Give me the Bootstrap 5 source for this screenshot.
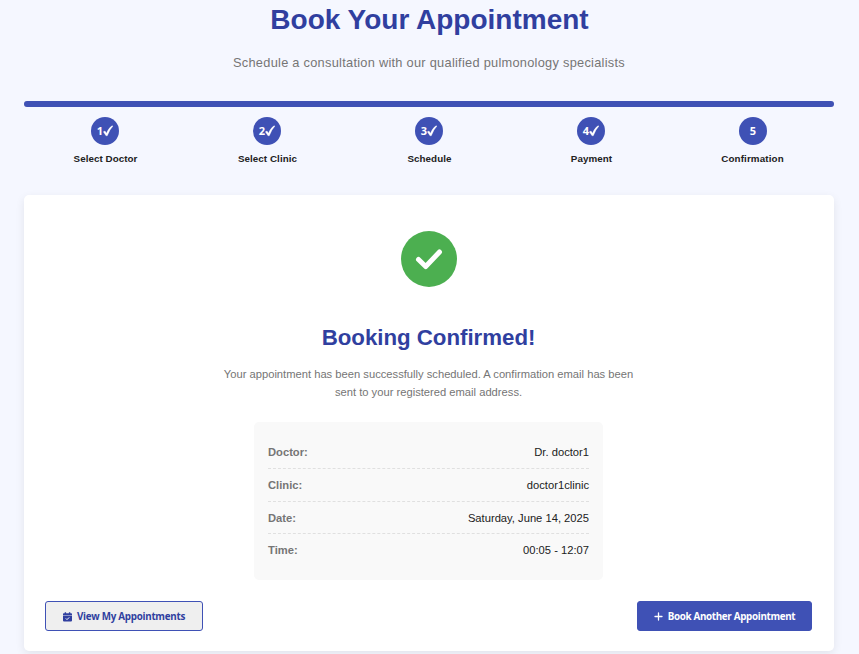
<!DOCTYPE html>
<html lang="en">
<head>
<meta charset="utf-8">
<meta name="viewport" content="width=device-width, initial-scale=1">
<title>Book Your Appointment</title>
<link href="https://cdn.jsdelivr.net/npm/bootstrap@5.3.0/dist/css/bootstrap.min.css" rel="stylesheet">
<style>
  body { background: #f5f7ff; font-family: "Liberation Sans", Arial, sans-serif; color: #212121; height: 654px; overflow: hidden; }
  .page { width: 810px; margin-left: 24px; }
  .page-title { font-size: 28px; line-height: 34px; color: #303f9f; padding-top: 3px; padding-left: 1px; }
  .page-sub { font-size: 12.8px; line-height: 20px; color: #757575; margin-top: 16px; letter-spacing: .27px; }
  .track { height: 6px; margin-top: 28px; background: #e0e0e0; border-radius: 3px; }
  .track .progress-bar { background: #3f51b5; }
  .steps { margin-top: 10px; }
  .step-dot { width: 28px; height: 28px; background: #3f51b5; font: 700 11px/28px "Open Sans", sans-serif; }
  .step-name { font-size: 9.8px; line-height: 15px; margin-top: 6px; padding-left: 1px; letter-spacing: .06px; }
  .col:last-child .step-name { padding-left: 0; padding-right: 1px; letter-spacing: .14px; }
  .panel { height: 456px; margin-top: 29px; padding: 36px 22px 20px 21px; border-radius: 5px; box-shadow: 0 3px 10px rgba(0,0,0,.08); }
  .panel-title { font-size: 22.3px; line-height: 28px; color: #303f9f; margin-top: 37px; letter-spacing: -.03px; }
  .panel-text { width: 420px; font-size: 11.2px; line-height: 18px; color: #757575; margin-top: 13px; }
  .details { width: 349px; height: 158px; margin-top: 21px; padding: 14px; background: #f9f9f9; border-radius: 5px; font-size: 11.2px; }
  .detail { height: 32px; line-height: 32px; }
  .detail:nth-child(2) { height: 33px; }
  .detail + .detail { border-top: 1px dashed #e0e0e0; }
  .detail-key { color: #757575; }
  .panel .btn { --bs-btn-border-color: #3f51b5; height: 30px; font: 700 9.8px/28px "Open Sans", sans-serif; letter-spacing: -.26px; border-radius: 3px; padding: 1px 0 0; gap: 5px; }
  .panel .btn-view { --bs-btn-color: #303f9f; --bs-btn-bg: #efefef; width: 158px; }
  .panel .btn-book { --bs-btn-color: #fff; --bs-btn-bg: #3f51b5; width: 175px; letter-spacing: -.31px; }
</style>
</head>
<body>
<main class="page">
  <h1 class="page-title fw-bold text-center mb-0">Book Your Appointment</h1>
  <p class="page-sub text-center mb-0">Schedule a consultation with our qualified pulmonology specialists</p>
  <div class="track progress"><div class="progress-bar w-100"></div></div>
  <div class="steps row g-0 text-center">
    <div class="col"><div class="step-dot rounded-circle text-white mx-auto d-flex align-items-center justify-content-center">1<svg width="10" height="12" viewBox="0 0 10 12"><path d="M.3 6.8 2 6l1.5 2.2Q5.500 3 9 .8L10 1Q6.500 4.700 4.300 10.800H3Z" fill="#fff" stroke="#fff" stroke-width=".3"/></svg></div><div class="step-name fw-bold">Select Doctor</div></div>
    <div class="col"><div class="step-dot rounded-circle text-white mx-auto d-flex align-items-center justify-content-center">2<svg width="10" height="12" viewBox="0 0 10 12"><path d="M.3 6.8 2 6l1.5 2.2Q5.500 3 9 .8L10 1Q6.500 4.700 4.300 10.800H3Z" fill="#fff" stroke="#fff" stroke-width=".3"/></svg></div><div class="step-name fw-bold">Select Clinic</div></div>
    <div class="col"><div class="step-dot rounded-circle text-white mx-auto d-flex align-items-center justify-content-center">3<svg width="10" height="12" viewBox="0 0 10 12"><path d="M.3 6.8 2 6l1.5 2.2Q5.500 3 9 .8L10 1Q6.500 4.700 4.300 10.800H3Z" fill="#fff" stroke="#fff" stroke-width=".3"/></svg></div><div class="step-name fw-bold">Schedule</div></div>
    <div class="col"><div class="step-dot rounded-circle text-white mx-auto d-flex align-items-center justify-content-center">4<svg width="10" height="12" viewBox="0 0 10 12"><path d="M.3 6.8 2 6l1.5 2.2Q5.500 3 9 .8L10 1Q6.500 4.700 4.300 10.800H3Z" fill="#fff" stroke="#fff" stroke-width=".3"/></svg></div><div class="step-name fw-bold">Payment</div></div>
    <div class="col"><div class="step-dot rounded-circle text-white mx-auto">5</div><div class="step-name fw-bold">Confirmation</div></div>
  </div>
  <section class="panel bg-white d-flex flex-column align-items-center">
    <svg class="flex-shrink-0" width="56" height="56" viewBox="0 0 56 56"><circle cx="28" cy="28" r="28" fill="#4caf50"/><path d="m17.500 28.500 7.200 7L38.500 21" fill="none" stroke="#fff" stroke-width="5" stroke-linecap="round" stroke-linejoin="round"/></svg>
    <h2 class="panel-title fw-bold mb-0">Booking Confirmed!</h2>
    <p class="panel-text text-center mb-0">Your appointment has been successfully scheduled. A confirmation email has been sent to your registered email address.</p>
    <div class="details">
      <div class="detail d-flex justify-content-between"><span class="detail-key fw-bold">Doctor:</span><span>Dr. doctor1</span></div>
      <div class="detail d-flex justify-content-between"><span class="detail-key fw-bold">Clinic:</span><span>doctor1clinic</span></div>
      <div class="detail d-flex justify-content-between"><span class="detail-key fw-bold">Date:</span><span>Saturday, June 14, 2025</span></div>
      <div class="detail d-flex justify-content-between"><span class="detail-key fw-bold">Time:</span><span>00:05 - 12:07</span></div>
    </div>
    <div class="d-flex justify-content-between w-100 mt-auto">
      <button type="button" class="btn btn-view d-flex align-items-center justify-content-center"><svg width="9" height="10" viewBox="0 0 9 10"><path d="M1.700.3h1.400v1h2.800v-1h1.400v1h.9q.8 0 .8.800V3H0v-.9q0-.8.800-.8h.9ZM0 3.600h9V8.600q0 1-1 1H1q-1 0-1-1Z" fill="#303f9f"/><path d="m2.800 6.400 1.200 1.200 2.200-2.200" fill="none" stroke="#fff"/></svg>View My Appointments</button>
      <button type="button" class="btn btn-book d-flex align-items-center justify-content-center"><svg width="9" height="9" viewBox="0 0 9 9"><path d="M4.500 1v7M1 4.500h7" stroke="#fff" stroke-width="1.300" stroke-linecap="round"/></svg>Book Another Appointment</button>
    </div>
  </section>
</main>
<script src="https://cdn.jsdelivr.net/npm/bootstrap@5.3.0/dist/js/bootstrap.bundle.min.js"></script>
</body>
</html>
